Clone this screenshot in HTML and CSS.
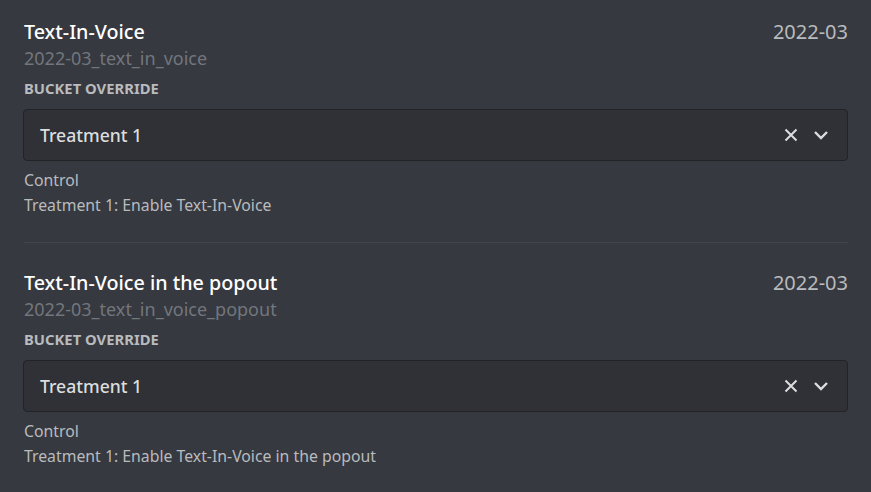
FILE: index.html
```html
<!DOCTYPE html>
<html lang="en">
  <head>
    <meta charset="UTF-8" />
    <title>Experiments</title>
    <link rel="stylesheet" href="styles.css">
  </head>
  <body>
    <div class="list">
      <div class="experiment">
        <div class="head">
          <div class="title">Text-In-Voice</div>
          <div class="date">2022-03</div>
        </div>
        <div class="key">2022-03_text_in_voice</div>
        <div class="label">Bucket Override</div>
        <div class="select">
          <div class="value">Treatment 1</div>
          <div class="icons">
            <svg width="14" height="14" viewBox="0 0 14 14"><path d="M1.5 1.5 L12.5 12.5 M12.5 1.5 L1.5 12.5" stroke="#dcddde" stroke-width="2" fill="none"/></svg>
            <svg width="16" height="16" viewBox="0 0 16 16"><path d="M2 5 L8 11 L14 5" stroke="#dcddde" stroke-width="2.4" fill="none"/></svg>
          </div>
        </div>
        <div class="desc">Control</div>
        <div class="desc">Treatment 1: Enable Text-In-Voice</div>
      </div>

      <div class="divider"></div>

      <div class="experiment">
        <div class="head">
          <div class="title">Text-In-Voice in the popout</div>
          <div class="date">2022-03</div>
        </div>
        <div class="key">2022-03_text_in_voice_popout</div>
        <div class="label">Bucket Override</div>
        <div class="select">
          <div class="value">Treatment 1</div>
          <div class="icons">
            <svg width="14" height="14" viewBox="0 0 14 14"><path d="M1.5 1.5 L12.5 12.5 M12.5 1.5 L1.5 12.5" stroke="#dcddde" stroke-width="2" fill="none"/></svg>
            <svg width="16" height="16" viewBox="0 0 16 16"><path d="M2 5 L8 11 L14 5" stroke="#dcddde" stroke-width="2.4" fill="none"/></svg>
          </div>
        </div>
        <div class="desc">Control</div>
        <div class="desc">Treatment 1: Enable Text-In-Voice in the popout</div>
      </div>
    </div>
  </body>
</html>
```

FILE: styles.css
```css
body {
  margin: 0;
  background-color: #36393f;
  font-family: 'Noto Sans', 'Open Sans', sans-serif;
}

.list {
  padding: 22px 23px 0 24px;
}

.head {
  display: flex;
  justify-content: space-between;
  align-items: center;
}

.title {
  color: #ffffff;
  font-size: 19.7px;
  font-weight: 500;
  line-height: 20px;
}

.date {
  color: #b9bbbe;
  font-size: 20px;
  line-height: 20px;
}

.key {
  margin-top: 6px;
  color: #72767d;
  font-size: 18px;
  line-height: 20px;
}

.label {
  margin-top: 12px;
  color: #b9bbbe;
  font-size: 14.8px;
  font-weight: 700;
  line-height: 16px;
  text-transform: uppercase;
}

.select {
  margin-top: 13px;
  margin-left: -1px;
  height: 50px;
  display: flex;
  justify-content: space-between;
  align-items: center;
  padding: 0 18px 0 16px;
  background-color: #2f3136;
  border: 1px solid #222327;
  border-radius: 4px;
}

.value {
  color: #dcddde;
  font-size: 17.6px;
  font-weight: 500;
}

.icons {
  display: flex;
  align-items: center;
  gap: 15px;
}

.icons svg {
  display: block;
}

.select + .desc {
  margin-top: 7px;
}

.desc {
  color: #b9bbbe;
  font-size: 15.8px;
  line-height: 25px;
}

.divider {
  margin: 24px 0 30px 0;
  height: 1px;
  background-color: #42454a;
}
```
